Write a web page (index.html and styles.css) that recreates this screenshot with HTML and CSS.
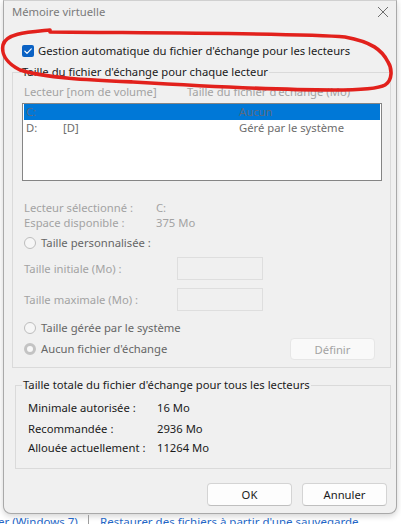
FILE: index.html
```html
<!DOCTYPE html>
<html lang="fr">
<head>
<meta charset="utf-8">
<title>Mémoire virtuelle</title>
<link rel="stylesheet" href="styles.css">
</head>
<body>
<div class="page">
  <div class="dialog">
    <div class="titlebar">
      <span class="title">Mémoire virtuelle</span>
      <svg class="close" width="12" height="12" viewBox="0 0 12 12"><path d="M1 1 L11 11 M11 1 L1 11" stroke="#6e6e6e" stroke-width="1" fill="none"/></svg>
    </div>

    <div class="check-row">
      <span class="checkbox"><svg width="12" height="12" viewBox="0 0 12 12"><path d="M2.8 6.1 L5 8.3 L9.3 3.9" stroke="#fff" stroke-width="1.2" fill="none" stroke-linecap="round" stroke-linejoin="round"/></svg></span>
      <span class="check-label">Gestion automatique du fichier d'échange pour les lecteurs</span>
    </div>

    <fieldset class="group group-drives">
      <legend>Taille du fichier d'échange pour chaque lecteur</legend>
      <div class="list-head"><span class="lh-1">Lecteur [nom de volume]</span><span>Taille du fichier d'échange (Mo)</span></div>
      <div class="listbox">
        <div class="lrow selected"><span class="c1">C:</span><span class="c2"></span><span class="c3">Aucun</span></div>
        <div class="lrow"><span class="c1">D:</span><span class="c2">[D]</span><span class="c3">Géré par le système</span></div>
      </div>

      <div class="info">
        <div class="info-row"><span class="info-label">Lecteur sélectionné :</span><span>C:</span></div>
        <div class="info-row"><span class="info-label">Espace disponible :</span><span>375 Mo</span></div>
      </div>

      <div class="radio-row r-custom"><span class="radio"></span><span class="radio-label">Taille personnalisée :</span></div>

      <div class="field-row f-initial"><span class="field-label">Taille initiale (Mo) :</span><span class="input"></span></div>
      <div class="field-row f-max"><span class="field-label">Taille maximale (Mo) :</span><span class="input"></span></div>

      <div class="radio-row r-system"><span class="radio"></span><span class="radio-label">Taille gérée par le système</span></div>
      <div class="radio-row r-none"><span class="radio checked"></span><span class="radio-label">Aucun fichier d'échange</span><span class="btn btn-disabled">Définir</span></div>
    </fieldset>

    <fieldset class="group group-total">
      <legend>Taille totale du fichier d'échange pour tous les lecteurs</legend>
      <div class="tot-row t1"><span class="tot-label">Minimale autorisée :</span><span>16 Mo</span></div>
      <div class="tot-row t2"><span class="tot-label">Recommandée :</span><span>2936 Mo</span></div>
      <div class="tot-row t3"><span class="tot-label">Allouée actuellement :</span><span>11264 Mo</span></div>
    </fieldset>

    <div class="actions">
      <span class="btn">OK</span>
      <span class="btn">Annuler</span>
    </div>
  </div>

  <div class="links">
    <span class="l1">er (Windows 7)</span>
    <span class="sep"></span>
    <span class="l2">Restaurer des fichiers à partir d'une sauvegarde</span>
  </div>

  <svg class="annot" width="401" height="524" viewBox="0 0 401 524">
    <path d="M50 30 C30 32, 6 33, 3 45 C1 55, 8 64, 20 70 C45 78, 90 80, 133 82 C200 86, 280 90, 333 90 C360 90, 378 89, 385 85 C393 80, 392 68, 388 62 C382 50, 372 42, 345 37 C300 33, 150 33, 50 32" fill="none" stroke="#e2211c" stroke-width="3.6" stroke-linecap="round" stroke-linejoin="round"/>
  </svg>
</div>
</body>
</html>
```
FILE: styles.css
```css
* { box-sizing: border-box; }
html, body { margin: 0; padding: 0; }
body {
  background: #ffffff;
  font-family: "Noto Sans", "Open Sans", sans-serif;
  font-size: 11.25px;
  color: #1b1b1b;
  width: 401px;
  height: 524px;
  overflow: hidden;
}
.page {
  position: relative;
  width: 401px;
  height: 524px;
  overflow: hidden;
}

.dialog {
  margin-left: 3px;
  width: 394px;
  background: #f0f0f0;
  border: 1px solid #a9a9a9;
  border-top-color: #d0d0d0;
  border-radius: 0 0 8px 8px;
  box-shadow: 0 2px 6px rgba(0, 0, 0, 0.18);
}

/* title bar */
.titlebar {
  display: flex;
  align-items: flex-start;
  height: 31px;
  padding: 3px 0 0 8px;
}
.title {
  line-height: 16px;
  color: #7a7a7a;
}
.close {
  margin-left: auto;
  margin-right: 7px;
  margin-top: 2px;
}

/* automatic checkbox */
.check-row {
  display: flex;
  align-items: center;
  height: 16px;
  margin: 11px 0 5px 18px;
  line-height: 16px;
}
.checkbox {
  width: 12px;
  height: 12px;
  border-radius: 2px;
  background: #0b62c4;
  display: flex;
}
.check-label {
  margin-left: 4px;
  color: #1b1b1b;
}

/* group boxes */
.group {
  margin: 0;
  border: 1px solid #dadada;
  min-width: 0;
}
.group legend {
  padding: 0 1px;
  margin-left: -1px;
  line-height: 16px;
  color: #1b1b1b;
}
.group-drives {
  margin-left: 8px;
  width: 379px;
  padding: 4px 8px 7px 9px;
}
.group-total {
  margin: 9px 0 0 11px;
  width: 376px;
  padding: 7px 8px 12px 7px;
}

.list-head {
  display: flex;
  padding-left: 2px;
  line-height: 16px;
  height: 16px;
  color: #a3a3a3;
  white-space: nowrap;
}
.lh-1 { width: 163px; }

.listbox {
  margin-top: 3px;
  height: 78px;
  border: 1px solid #858585;
  background: #ffffff;
  padding: 0 1px;
}
.lrow {
  display: flex;
  height: 16px;
  line-height: 16px;
  padding-left: 2px;
  color: #6d6d6d;
}
.lrow.selected {
  background: #0078d7;
  color: #5a6b80;
}
.c1 { width: 37px; }
.c2 { width: 176px; }

.info {
  margin-top: 19px;
  padding-left: 2px;
  color: #a3a3a3;
}
.info-row {
  display: flex;
  line-height: 15px;
  height: 15px;
}
.info-label { width: 132px; }

.radio-row {
  display: flex;
  align-items: center;
  height: 16px;
  padding-left: 2px;
}
.radio {
  width: 12px;
  height: 12px;
  border-radius: 50%;
  border: 1px solid #bdbdbd;
  background: #f6f6f6;
  flex: none;
}
.radio.checked {
  border: 3.5px solid #c3c3c3;
  background: #f8f8f8;
}
.radio-label {
  margin-left: 5px;
  color: #666666;
  line-height: 16px;
}
.r-custom { margin-top: 5px; }
.r-system { margin-top: 9px; }
.r-none { margin-top: 2px; height: 22px; }

.field-row {
  display: flex;
  align-items: center;
  height: 23px;
  padding-left: 2px;
  color: #a3a3a3;
}
.field-label { width: 153px; }
.input {
  width: 86px;
  height: 23px;
  border: 1px solid #dedede;
  background: #f0f0f0;
}
.f-initial { margin-top: 6px; }
.f-max { margin-top: 8px; }

.btn {
  display: flex;
  align-items: center;
  justify-content: center;
  width: 85px;
  height: 23px;
  border: 1px solid #d4d4d4;
  border-bottom-color: #bfbfbf;
  border-radius: 4px;
  background: #fdfdfd;
  color: #1b1b1b;
}
.btn-disabled {
  margin-left: auto;
  margin-right: 7px;
  height: 22px;
  border-color: #e6e6e6;
  background: #f9f9f9;
  color: #a3a3a3;
}

.tot-row {
  display: flex;
  height: 16px;
  line-height: 16px;
  padding-left: 5px;
  color: #1b1b1b;
}
.tot-label { width: 129px; }
.t2 { margin-top: 5px; }
.t3 { margin-top: 3px; }

.actions {
  display: flex;
  justify-content: flex-end;
  gap: 10px;
  margin-top: 14px;
  padding: 0 9px 7px 0;
}

/* page behind the dialog */
.links {
  display: flex;
  align-items: flex-start;
  margin-left: -2px;
  line-height: 16px;
  font-size: 11.5px;
  color: #2466c6;
  white-space: nowrap;
}
.l1 { width: 90px; }
.sep {
  width: 1px;
  height: 12px;
  margin-top: 1px;
  background: #9c9c9c;
}
.l2 { margin-left: 11px; }

.annot {
  position: absolute;
  left: 0;
  top: 0;
  pointer-events: none;
}
```
